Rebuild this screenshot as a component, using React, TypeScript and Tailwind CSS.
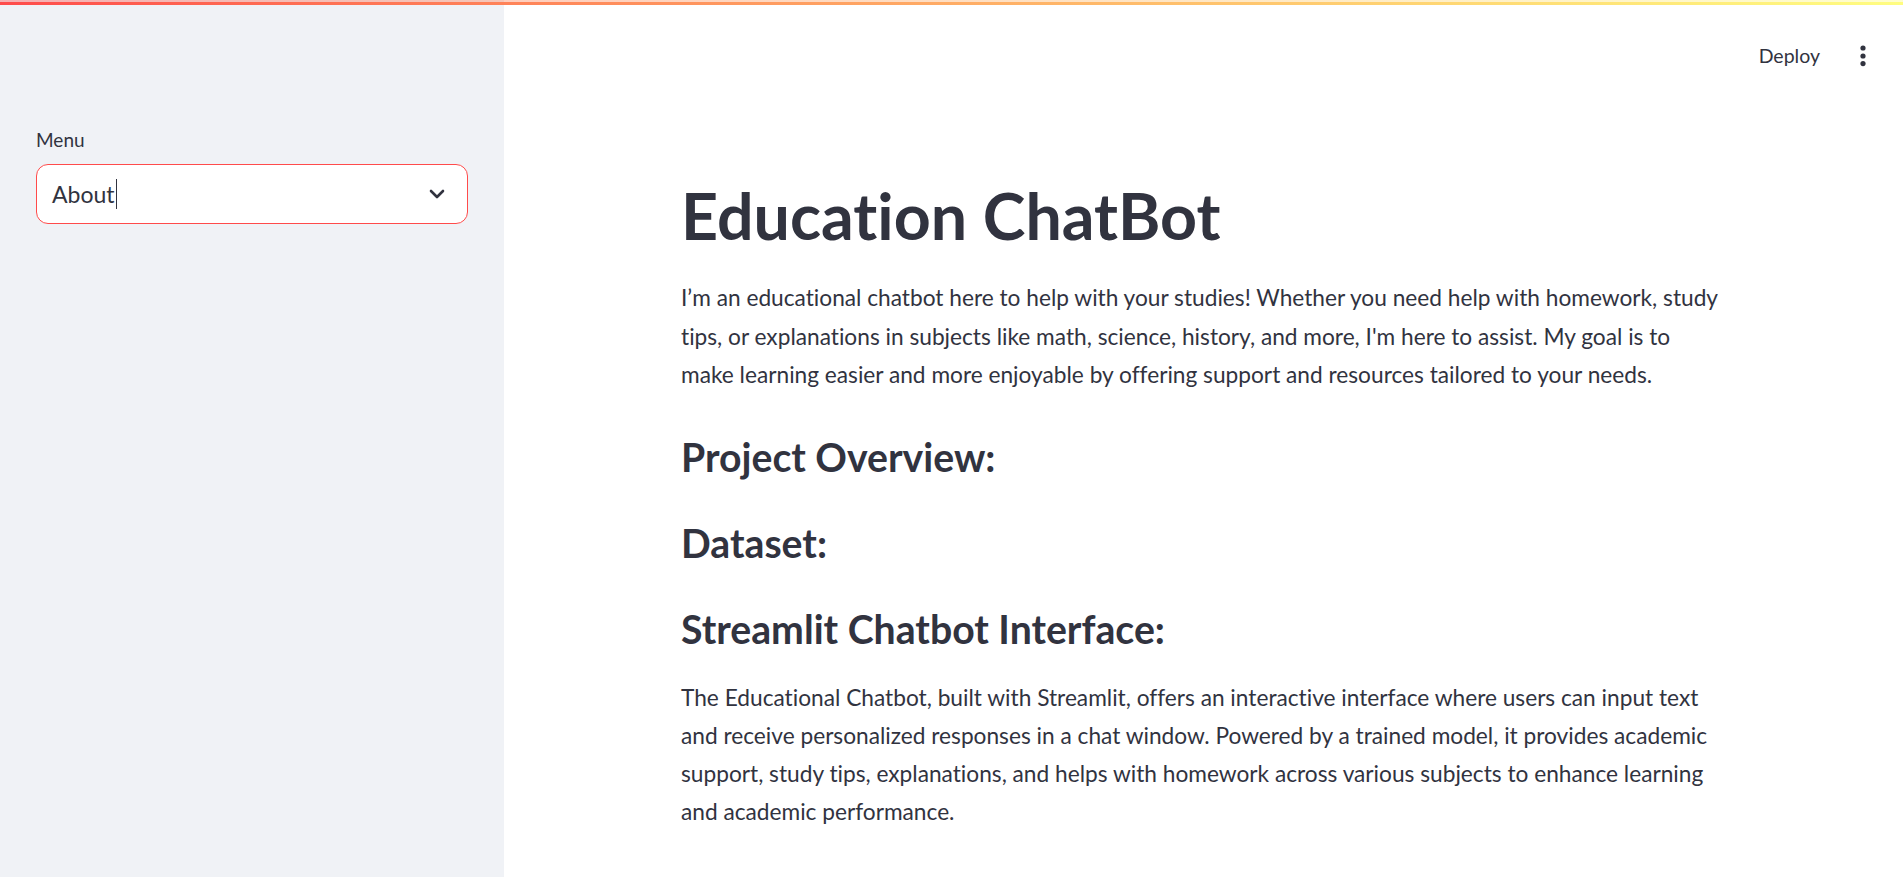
import React from "react";

function Chevron() {
  return (
    <svg width="16" height="10" viewBox="0 0 16 10" fill="none">
      <path d="M2 2 L8 8 L14 2" stroke="#31333f" strokeWidth="2.6" strokeLinecap="round" strokeLinejoin="round" />
    </svg>
  );
}

function Kebab() {
  return (
    <svg width="6" height="22" viewBox="0 0 6 22" fill="#31333f">
      <circle cx="3" cy="3" r="2.6" />
      <circle cx="3" cy="11" r="2.6" />
      <circle cx="3" cy="18.6" r="2.6" />
    </svg>
  );
}

export default function App() {
  return (
    <div className="relative flex h-[877px] w-full overflow-hidden bg-white text-[#31333f] [font-family:Lato,'Liberation_Sans',sans-serif] [font-variant-ligatures:none]">
      <div className="absolute left-0 right-0 top-0 z-10 flex flex-col">
        <div className="h-[2px] w-full bg-gradient-to-r from-[#ff4b4b] to-[#fffd80] opacity-40" />
        <div className="h-[3px] w-full bg-gradient-to-r from-[#ff4b4b] to-[#fffd80]" />
      </div>

      <aside className="h-full w-[504px] shrink-0 bg-[#f0f2f6] px-[36px] pt-[125px]">
        <label className="block h-[30px] text-[19px] leading-[30px]">Menu</label>
        <div className="mt-[9px] flex h-[60px] w-[432px] items-center justify-between rounded-[12px] border border-[#ff4b4b] bg-white pl-[15px] pr-[22px]">
          <div className="flex items-center">
            <span className="text-[23px] leading-[30px]">About</span>
            <span className="ml-[1px] h-[30px] w-[1px] bg-[#31333f]" />
          </div>
          <Chevron />
        </div>
      </aside>

      <main className="flex h-full flex-1 flex-col">
        <header className="flex h-[112px] shrink-0 items-center justify-end pr-[37px]">
          <span className="text-[19.5px] leading-[24px]">Deploy</span>
          <span className="ml-[40px] flex items-center">
            <Kebab />
          </span>
        </header>

        <div className="ml-[177px] w-[1050px]">
          <h1 className="mt-[64px] text-[64.5px] font-bold leading-[78px]">Education ChatBot</h1>
          <p className="mt-[25px] text-[22.7px] leading-[38.6px]">
            I’m an educational chatbot here to help with your studies! Whether you need help with homework, study
            <br />
            tips, or explanations in subjects like math, science, history, and more, I'm here to assist. My goal is to
            <br />
            make learning easier and more enjoyable by offering support and resources tailored to your needs.
          </p>
          <div className="mt-[25px]">
            <h3 className="h-[86px] pt-[12px] text-[39.2px] font-bold leading-[50px]">Project Overview:</h3>
            <h3 className="h-[86px] pt-[12px] text-[39.2px] font-bold leading-[50px]">Dataset:</h3>
            <h3 className="h-[86px] pt-[12px] text-[39.2px] font-bold leading-[50px]">Streamlit Chatbot Interface:</h3>
          </div>
          <p className="mt-[1px] text-[22.7px] leading-[38px]">
            The Educational Chatbot, built with Streamlit, offers an interactive interface where users can input text
            <br />
            and receive personalized responses in a chat window. Powered by a trained model, it provides academic
            <br />
            support, study tips, explanations, and helps with homework across various subjects to enhance learning
            <br />
            and academic performance.
          </p>
        </div>
      </main>
    </div>
  );
}
